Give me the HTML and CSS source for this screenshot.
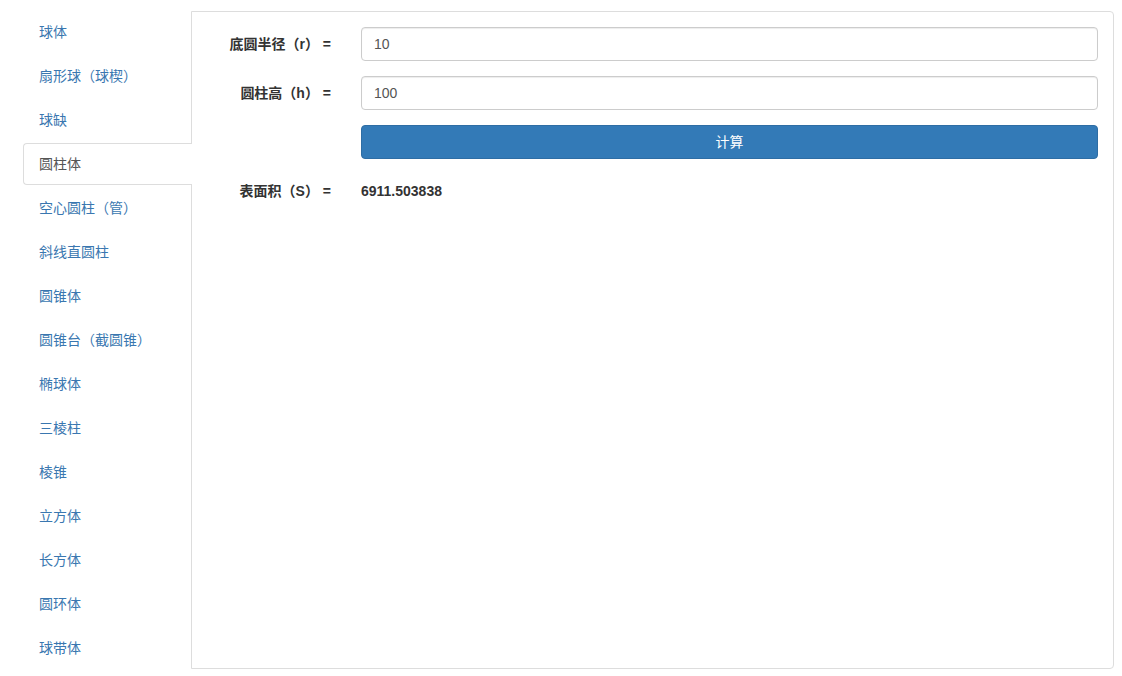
FILE: index.html
```html
<!DOCTYPE html>
<html lang="zh-CN">
<head>
<meta charset="utf-8">
<title>圆柱体</title>
<link rel="stylesheet" href="styles.css">
</head>
<body>
<div class="layout">
  <ul class="tabs">
    <li><a href="#">球体</a></li>
    <li><a href="#">扇形球（球楔）</a></li>
    <li><a href="#">球缺</a></li>
    <li class="active"><a href="#">圆柱体</a></li>
    <li><a href="#">空心圆柱（管）</a></li>
    <li><a href="#">斜线直圆柱</a></li>
    <li><a href="#">圆锥体</a></li>
    <li><a href="#">圆锥台（截圆锥）</a></li>
    <li><a href="#">椭球体</a></li>
    <li><a href="#">三棱柱</a></li>
    <li><a href="#">棱锥</a></li>
    <li><a href="#">立方体</a></li>
    <li><a href="#">长方体</a></li>
    <li><a href="#">圆环体</a></li>
    <li><a href="#">球带体</a></li>
  </ul>
  <div class="panel">
    <form class="form">
      <label class="label">底圆半径（r） =</label>
      <input class="input" type="text" value="10">
      <label class="label">圆柱高（h） =</label>
      <input class="input" type="text" value="100">
      <span></span>
      <button class="btn" type="button">计算</button>
      <label class="label">表面积（S） =</label>
      <span class="result">6911.503838</span>
    </form>
  </div>
</div>
</body>
</html>
```
FILE: styles.css
```css
* { box-sizing: border-box; }
html, body { margin: 0; padding: 0; background: #fff; }
body {
  font-family: "Liberation Sans", "Noto Sans CJK SC", sans-serif;
  font-size: 14px;
  line-height: 20px;
  color: #333;
}
.layout {
  display: flex;
  align-items: stretch;
  padding: 11px 8px 0 23px;
}
.tabs {
  list-style: none;
  margin: 0;
  padding: 0;
  width: 168px;
  flex: none;
  display: flex;
  flex-direction: column;
  gap: 2px;
}
.tabs li {
  height: 42px;
  margin-right: -1px;
  position: relative;
  z-index: 1;
}
.tabs a {
  display: block;
  height: 42px;
  padding: 10px 15px 12px;
  border: 1px solid transparent;
  border-right: 0;
  border-radius: 4px 0 0 4px;
  color: #3a77b0;
  text-decoration: none;
}
.tabs .active a {
  color: #555;
  background: #fff;
  border-color: #ddd;
}
.panel {
  flex: 1;
  border: 1px solid #ddd;
  border-radius: 0 4px 4px 0;
  padding: 15px 15px;
}
.form {
  display: grid;
  grid-template-columns: 124px 1fr;
  column-gap: 30px;
  row-gap: 15px;
  align-items: center;
}
.label {
  font-weight: bold;
  text-align: right;
  line-height: 34px;
  white-space: pre;
}
.input {
  height: 34px;
  padding: 6px 12px;
  font: inherit;
  color: #555;
  border: 1px solid #ccc;
  border-radius: 4px;
  box-shadow: inset 0 1px 1px rgba(0,0,0,.075);
  width: 100%;
}
.btn {
  height: 34px;
  font: inherit;
  color: #fff;
  background: #337ab7;
  border: 1px solid #2e6da4;
  border-radius: 4px;
  width: 100%;
}
.result {
  font-weight: bold;
  line-height: 34px;
}
```
